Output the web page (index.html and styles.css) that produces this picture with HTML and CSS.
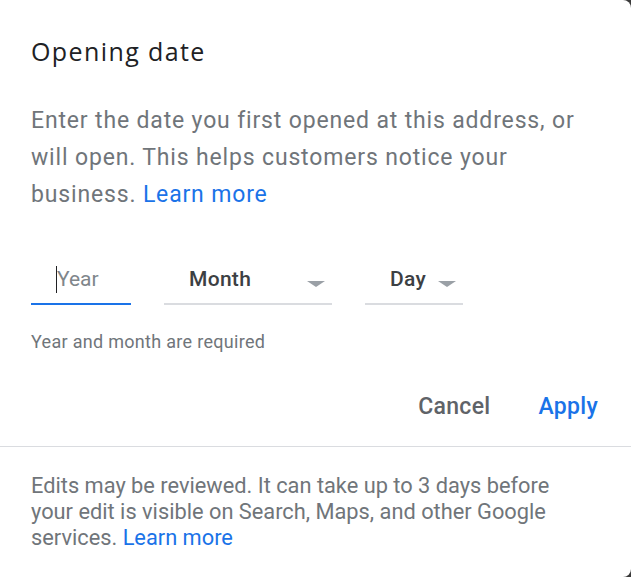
FILE: index.html
```
<!DOCTYPE html>
<html lang="en">
<head>
  <meta charset="UTF-8" />
  <meta name="viewport" content="width=device-width, initial-scale=1" />
  <title>Opening date</title>
  <link rel="stylesheet" href="styles.css">
</head>
<body>
  <div class="dialog">
    <div class="content">
      <h2 class="title">Opening date</h2>
      <p class="desc">Enter the date you first opened at this address, or will open. This helps customers notice your business. <a href="#" class="link">Learn more</a></p>

      <div class="fields">
        <div class="field field-year active">
          <span class="caret"></span><span class="placeholder">Year</span>
        </div>
        <div class="field field-month">
          <span class="value">Month</span><span class="arrow"></span>
        </div>
        <div class="field field-day">
          <span class="value">Day</span><span class="arrow"></span>
        </div>
      </div>

      <p class="hint">Year and month are required</p>

      <div class="actions">
        <button class="btn btn-cancel">Cancel</button>
        <button class="btn btn-apply">Apply</button>
      </div>
    </div>

    <div class="footer">
      <p>Edits may be reviewed. It can take up to 3 days before your edit is visible on Search, Maps, and other Google services. <a href="#" class="link">Learn more</a></p>
    </div>
  </div>
</body>
</html>
```

FILE: styles.css
```
body {
  margin: 0;
  background: #3a3a3a;
  font-family: Roboto, "Liberation Sans", Arial, sans-serif;
}
.dialog {
  width: 631px;
  height: 577px;
  background: #fff;
  border-radius: 0 8px 8px 0;
  overflow: hidden;
}
.content {
  padding: 36px 33px 0 31px;
}
.title {
  margin: 0;
  font-family: "Open Sans", Roboto, sans-serif;
  font-size: 25px;
  line-height: 30px;
  font-weight: 400;
  letter-spacing: 1.4px;
  color: #202124;
}
.desc {
  margin: 36px 0 0;
  max-width: 552px;
  font-size: 23px;
  line-height: 37px;
  letter-spacing: 0.84px;
  color: #70757a;
}
.link {
  color: #1a73e8;
  text-decoration: none;
}
.fields {
  display: flex;
  gap: 33px;
  margin-top: 51px;
}
.field {
  display: flex;
  justify-content: space-between;
  box-sizing: border-box;
  padding: 0 7px 9px 25px;
  border-bottom: 2px solid #dadce0;
  font-size: 21px;
  line-height: 30px;
}
.field-year {
  width: 100px;
  justify-content: flex-start;
}
.field-month {
  width: 168px;
}
.field-day {
  width: 98px;
}
.field.active {
  border-bottom-color: #1a73e8;
}
.caret {
  width: 1px;
  height: 27px;
  margin-top: 2px;
  background: #202124;
}
.placeholder {
  color: #80868b;
}
.value {
  color: #3c4043;
  font-weight: 500;
  letter-spacing: 0.3px;
}
.arrow {
  width: 0;
  height: 0;
  margin-top: 17px;
  border-left: 9px solid transparent;
  border-right: 9px solid transparent;
  border-top: 6px solid #9aa0a6;
}
.hint {
  margin: 27px 0 0;
  font-size: 18px;
  line-height: 20px;
  letter-spacing: 0.3px;
  color: #70757a;
}
.actions {
  display: flex;
  justify-content: flex-end;
  gap: 48px;
  margin-top: 40px;
}
.btn {
  background: none;
  border: none;
  padding: 0;
  font-family: inherit;
  font-size: 23px;
  line-height: 30px;
  font-weight: 500;
  letter-spacing: 0.3px;
  cursor: pointer;
}
.btn-cancel {
  color: #5f6368;
}
.btn-apply {
  color: #1a73e8;
}
.footer {
  margin-top: 24px;
  border-top: 1px solid #dadce0;
  padding: 26px 33px 0 31px;
}
.footer p {
  margin: 0;
  max-width: 535px;
  font-size: 21.8px;
  line-height: 26px;
  color: #70757a;
}
```
